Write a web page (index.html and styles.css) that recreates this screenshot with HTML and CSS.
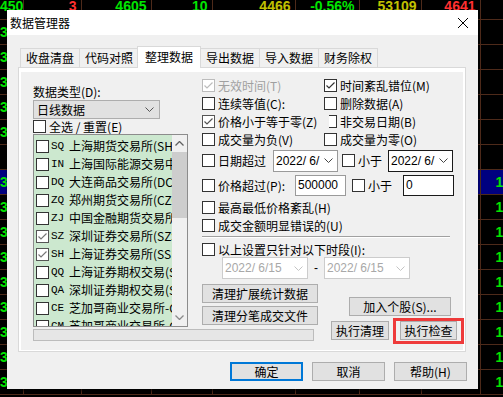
FILE: index.html
```html
<!DOCTYPE html>
<html lang="zh-CN">
<head>
    <meta charset="UTF-8">
    <meta name="viewport" content="width=device-width, initial-scale=1.0">
    <title>数据管理器</title>
    <link rel="stylesheet" href="styles.css">
</head>
<body>
    <table class="quotes">
        <colgroup>
            <col style="width:23px"><col style="width:58px"><col style="width:70px"><col style="width:61px"><col style="width:83px"><col style="width:64px"><col style="width:62px"><col style="width:59px"><col style="width:40px">
        </colgroup>
        <tr><td class="up">4503</td><td class="down">3</td><td class="up">4605</td><td class="up">10</td><td class="flat">4466</td><td class="up">-0.56%</td><td class="flat">53109</td><td class="down">4641</td><td></td></tr>
        <tr><td class="up">3505</td><td></td><td></td><td></td><td></td><td></td><td></td><td></td><td></td></tr>
        <tr><td class="up">3515</td><td></td><td></td><td></td><td></td><td></td><td></td><td></td><td></td></tr>
        <tr><td class="up">3516</td><td></td><td></td><td></td><td></td><td></td><td></td><td></td><td></td></tr>
        <tr><td class="up">3517</td><td></td><td></td><td></td><td></td><td></td><td></td><td></td><td></td></tr>
        <tr><td class="up">3520</td><td></td><td></td><td></td><td></td><td></td><td></td><td></td><td></td></tr>
        <tr><td class="up"></td><td></td><td></td><td></td><td></td><td></td><td></td><td></td><td></td></tr>
        <tr class="sel"><td class="up">3088</td><td></td><td></td><td></td><td></td><td></td><td></td><td></td><td class="up last">12</td></tr>
        <tr><td class="up">3070</td><td></td><td></td><td></td><td></td><td></td><td></td><td></td><td class="up last">12</td></tr>
        <tr><td class="up">3071</td><td></td><td></td><td></td><td></td><td></td><td></td><td></td><td class="up last">12</td></tr>
        <tr><td class="up">3020</td><td></td><td></td><td></td><td></td><td></td><td></td><td></td><td class="up last">12</td></tr>
        <tr><td class="up">3021</td><td></td><td></td><td></td><td></td><td></td><td></td><td></td><td class="up last">12</td></tr>
        <tr><td class="up">3022</td><td></td><td></td><td></td><td></td><td></td><td></td><td></td><td class="up last">12</td></tr>
        <tr><td class="up">3530</td><td></td><td></td><td></td><td></td><td></td><td></td><td></td><td class="up last">12</td></tr>
        <tr><td class="up">3880</td><td></td><td></td><td></td><td></td><td></td><td></td><td></td><td class="up last">12</td></tr>
        <tr><td class="up">3000</td><td></td><td></td><td></td><td></td><td></td><td></td><td></td><td class="up last">12</td></tr>
    </table>

    <div class="dialog">
        <div class="titlebar">
            <span class="title">数据管理器</span>
            <svg class="close" width="10" height="10" viewBox="0 0 10 10"><path d="M0 0L10 10M10 0L0 10" stroke="#000" stroke-width="1"/></svg>
        </div>
        <div class="dialog-body">
            <div class="tabs">
                <span class="tab">收盘清盘</span>
                <span class="tab">代码对照</span>
                <span class="tab active">整理数据</span>
                <span class="tab">导出数据</span>
                <span class="tab">导入数据</span>
                <span class="tab">财务除权</span>
            </div>
            <div class="panel">
                <div class="page">
                    <div class="col-left">
                        <div class="label">数据类型(D):</div>
                        <div class="combo">
                            <span>日线数据</span>
                            <svg width="9" height="5" viewBox="0 0 9 5"><path d="M0.5 0.5L4.5 4.5L8.5 0.5" fill="none" stroke="#555"/></svg>
                        </div>
                        <div class="check-all"><span class="cb"></span>全选 / 重置(E)</div>
                        <div class="list">
                            <ul class="items">
                                <li><span class="cb"></span><span class="code">SQ</span>上海期货交易所(SHFE)</li>
                                <li><span class="cb"></span><span class="code">IN</span>上海国际能源交易中心</li>
                                <li><span class="cb"></span><span class="code">DQ</span>大连商品交易所(DCE)</li>
                                <li><span class="cb"></span><span class="code">ZQ</span>郑州期货交易所(CZCE)</li>
                                <li><span class="cb"></span><span class="code">ZJ</span>中国金融期货交易所</li>
                                <li><span class="cb soft"><svg width="11" height="11" viewBox="0 0 11 11"><path d="M1.5 5.5L4 8L9.5 2.5" fill="none" stroke="#777" stroke-width="1.2"/></svg></span><span class="code">SZ</span>深圳证券交易所(SZSE)</li>
                                <li><span class="cb soft"><svg width="11" height="11" viewBox="0 0 11 11"><path d="M1.5 5.5L4 8L9.5 2.5" fill="none" stroke="#777" stroke-width="1.2"/></svg></span><span class="code">SH</span>上海证券交易所(SSE)</li>
                                <li><span class="cb"></span><span class="code">QQ</span>上海证券期权交易(SHO)</li>
                                <li><span class="cb"></span><span class="code">QA</span>深圳证券期权交易(SZO)</li>
                                <li><span class="cb"></span><span class="code">CE</span>芝加哥商业交易所-CME</li>
                                <li><span class="cb"></span><span class="code">CM</span>芝加哥商业交易所-CBOT</li>
                            </ul>
                            <div class="scrollbar">
                                <div class="sb-btn"><svg width="9" height="5" viewBox="0 0 9 5"><path d="M0.5 4.5L4.5 0.5L8.5 4.5" fill="none" stroke="#606060" stroke-width="1.3"/></svg></div>
                                <div class="sb-thumb"></div>
                                <div class="sb-track"></div>
                                <div class="sb-btn"><svg width="9" height="5" viewBox="0 0 9 5"><path d="M0.5 0.5L4.5 4.5L8.5 0.5" fill="none" stroke="#8a8a8a" stroke-width="1.3"/></svg></div>
                            </div>
                        </div>
                        <div class="progress"></div>
                    </div>

                    <div class="col-right">
                        <div class="opts">
                            <div class="opt off"><span class="cb dis"><svg width="11" height="11" viewBox="0 0 11 11"><path d="M1.5 5.5L4 8L9.5 2.5" fill="none" stroke="#bcbcbc" stroke-width="1.2"/></svg></span>无效时间(T)</div>
                            <div class="opt"><span class="cb"><svg width="11" height="11" viewBox="0 0 11 11"><path d="M1.5 5.5L4 8L9.5 2.5" fill="none" stroke="#333" stroke-width="1.2"/></svg></span>时间紊乱错位(M)</div>
                            <div class="opt"><span class="cb"></span>连续等值(C):</div>
                            <div class="opt"><span class="cb"></span>删除数据(A)</div>
                            <div class="opt"><span class="cb soft"><svg width="11" height="11" viewBox="0 0 11 11"><path d="M1.5 5.5L4 8L9.5 2.5" fill="none" stroke="#555" stroke-width="1.2"/></svg></span>价格小于等于零(Z)</div>
                            <div class="opt"><span class="cb cut"></span>非交易日期(B)</div>
                            <div class="opt"><span class="cb"></span>成交量为负(V)</div>
                            <div class="opt"><span class="cb"></span>成交量为零(O)</div>
                        </div>

                        <div class="line-row tall">
                            <span class="cb"></span><span class="lbl w-date">日期超过</span>
                            <div class="datebox">
                                <span>2022/ 6/</span>
                                <svg width="9" height="5" viewBox="0 0 9 5"><path d="M0.5 0.5L4.5 4.5L8.5 0.5" fill="none" stroke="#444"/></svg>
                            </div>
                            <span class="cb gap-date"></span><span class="lbl w-less">小于</span>
                            <div class="datebox dark">
                                <span>2022/ 6/</span>
                                <svg width="9" height="5" viewBox="0 0 9 5"><path d="M0.5 0.5L4.5 4.5L8.5 0.5" fill="none" stroke="#444"/></svg>
                            </div>
                        </div>

                        <div class="line-row tall">
                            <span class="cb"></span><span class="lbl w-price">价格超过(P):</span>
                            <div class="numbox">500000</div>
                            <span class="cb gap-price"></span><span class="lbl w-less2">小于</span>
                            <div class="numbox dark">0</div>
                        </div>

                        <div class="opt single"><span class="cb"></span>最高最低价格紊乱(H)</div>
                        <div class="opt single last"><span class="cb"></span>成交金额明显错误的(U)</div>
                        <div class="sep"></div>
                        <div class="opt period"><span class="cb"></span>以上设置只针对以下时段(I):</div>

                        <div class="range">
                            <div class="datebox disabled">
                                <span>2022/ 6/15</span>
                                <svg width="9" height="5" viewBox="0 0 9 5"><path d="M0.5 0.5L4.5 4.5L8.5 0.5" fill="none" stroke="#c4c4c4"/></svg>
                            </div>
                            <span class="dash">-</span>
                            <div class="datebox disabled">
                                <span>2022/ 6/15</span>
                                <svg width="9" height="5" viewBox="0 0 9 5"><path d="M0.5 0.5L4.5 4.5L8.5 0.5" fill="none" stroke="#c4c4c4"/></svg>
                            </div>
                        </div>

                        <div class="actions">
                            <div class="stack-left">
                                <button class="btn wide">清理扩展统计数据</button>
                                <button class="btn wide">清理分笔成交文件</button>
                            </div>
                            <div class="stack-right">
                                <button class="btn add">加入个股(S)...</button>
                                <div class="exec">
                                    <button class="btn run">执行清理</button>
                                    <span class="mark"><button class="btn check">执行检查</button></span>
                                </div>
                            </div>
                        </div>
                    </div>
                </div>
            </div>
            <div class="footer">
                <button class="btn foot default">确定</button>
                <button class="btn foot">取消</button>
                <button class="btn foot">帮助(H)</button>
            </div>
        </div>
    </div>
</body>
</html>
```

FILE: styles.css
```css
* {
    box-sizing: border-box;
}

body {
    margin: 0;
    background-color: #000;
    font-family: "Noto Sans CJK SC", sans-serif;
    font-size: 12px;
    color: #000;
    overflow: hidden;
    position: relative;
    height: 397px;
}

/* quote grid behind the dialog */
.quotes {
    border-collapse: collapse;
    table-layout: fixed;
    margin-top: -6px;
    width: 520px;
    font-family: "Liberation Sans", Arial, sans-serif;
    font-weight: bold;
    font-size: 14px;
}

.quotes td {
    height: 25px;
    padding: 0 4px 0 0;
    border-right: 1px solid #4e2a1a;
    border-bottom: 1px solid #4e2a1a;
    text-align: right;
    white-space: nowrap;
    overflow: hidden;
    line-height: 24px;
}

.quotes td.last {
    text-align: left;
    padding-left: 15px;
}

.quotes .sel td {
    background-color: #000080;
}

.up { color: #00e600; }
.down { color: #ff3030; }
.flat { color: #c0c000; }

/* dialog window */
.dialog {
    position: absolute;
    left: 7px;
    top: 10px;
    width: 471px;
    height: 379px;
    background-color: #f0f0f0;
    box-shadow: 0 2px 2px rgba(0, 0, 0, 0.6);
}

.titlebar {
    height: 25px;
    background-color: #fff;
    display: flex;
    align-items: center;
    justify-content: space-between;
    padding: 0 10px 0 3px;
}

.title {
    font-size: 12px;
    line-height: 16px;
}

.dialog-body {
    padding: 11px 0 0 11px;
}

.tabs {
    display: flex;
    align-items: flex-end;
    height: 21px;
    padding-left: 2px;
}

.tab {
    height: 19px;
    padding: 0 5px;
    line-height: 18px;
    border: 1px solid #d9d9d9;
    border-bottom: none;
    background-color: #f0f0f0;
    margin-right: -1px;
}

.tab.active {
    position: relative;
    z-index: 1;
    height: 22px;
    padding: 0 7px;
    margin-bottom: -1px;
    margin-left: -1px;
    background-color: #fff;
    line-height: 19px;
}

.panel {
    width: 448px;
    height: 285px;
    border: 1px solid #d9d9d9;
    background-color: #fff;
    padding: 4px 2px 1px 2px;
}

.page {
    height: 100%;
    background-color: #f0f0f0;
    display: flex;
    padding-left: 12px;
}

/* left column */
.col-left {
    width: 156px;
    padding-top: 12px;
}

.label {
    line-height: 16px;
}

.combo {
    width: 127px;
    height: 19px;
    border: 1px solid #adadad;
    background-color: #e1e1e1;
    display: flex;
    align-items: center;
    justify-content: space-between;
    padding: 0 5px 0 3px;
    line-height: 16px;
}

.check-all {
    height: 15px;
    display: flex;
    align-items: center;
    line-height: 15px;
}

.check-all .cb {
    margin-right: 3px;
}

.cb {
    display: inline-block;
    flex: none;
    width: 13px;
    height: 13px;
    border: 1px solid #333;
    background-color: #fff;
}

.cb svg {
    display: block;
}

.cb.soft {
    border-color: #555;
}

.cb.dis {
    border-color: #bcbcbc;
}

.cb.cut {
    width: 8px;
    border-left: none;
    margin-left: 5px;
    margin-right: 3px !important;
}

.list {
    width: 155px;
    height: 193px;
    border: 1px solid #8c8c8c;
    background-color: #cce8cf;
    display: flex;
}

.items {
    list-style: none;
    margin: 0;
    padding: 2px 0 0 2px;
    flex: 1;
    overflow: hidden;
}

.items li {
    height: 18px;
    display: flex;
    align-items: center;
    white-space: nowrap;
    line-height: 18px;
}

.code {
    flex: none;
    width: 18px;
    margin-left: 2px;
    font-family: "Liberation Mono", monospace;
    font-size: 11px;
}

.scrollbar {
    width: 15px;
    display: flex;
    flex-direction: column;
    background-color: #f0f0f0;
}

.sb-btn {
    height: 17px;
    display: flex;
    align-items: center;
    justify-content: center;
}

.sb-thumb {
    height: 66px;
    background-color: #cdcdcd;
}

.sb-track {
    flex: 1;
}

.progress {
    width: 281px;
    height: 12px;
    margin-top: 2px;
    border: 1px solid #bcbcbc;
    background-color: #e6e6e6;
}

/* right column */
.col-right {
    width: 262px;
    margin-left: 13px;
    padding-top: 4px;
}

.opts {
    display: grid;
    grid-template-columns: 122px 1fr;
}

.opt {
    height: 18px;
    display: flex;
    align-items: center;
    white-space: nowrap;
}

.opt .cb {
    margin-right: 3px;
}

.opt.off {
    color: #a0a0a0;
}

.opt.last {
    height: 19px;
}

.line-row {
    display: flex;
    align-items: center;
    white-space: nowrap;
}

.line-row.tall {
    height: 25px;
}

.lbl {
    flex: none;
    padding-left: 3px;
}

.w-date { width: 58px; }
.w-less { width: 33px; }
.w-price { width: 80px; }
.w-less2 { width: 38px; }

.gap-date { margin-left: 4px; }
.gap-price { margin-left: 6px; }

.datebox {
    flex: none;
    width: 65px;
    height: 22px;
    border: 1px solid #9a9a9a;
    background-color: #fff;
    display: flex;
    align-items: center;
    justify-content: space-between;
    padding: 0 4px 0 2px;
    font-family: "Liberation Sans", Arial, sans-serif;
    font-size: 12px;
}

.datebox.dark {
    border-color: #1a1a1a;
}

.datebox.disabled {
    width: 86px;
    border-color: #cccccc;
    color: #a8a8a8;
}

.numbox {
    flex: none;
    width: 51px;
    height: 21px;
    border: 1px solid #9a9a9a;
    background-color: #fff;
    padding-left: 2px;
    line-height: 19px;
    font-family: "Liberation Sans", Arial, sans-serif;
    font-size: 12px;
}

.numbox.dark {
    border-color: #1a1a1a;
}

.sep {
    width: 248px;
    margin-top: 1px;
    border-top: 1px solid #a0a0a0;
    border-bottom: 1px solid #fff;
}

.opt.period {
    height: 16px;
    margin-top: 3px;
}

.range {
    display: flex;
    align-items: center;
    height: 22px;
    padding-left: 20px;
}

.dash {
    width: 16px;
    text-align: center;
    font-family: "Liberation Sans", Arial, sans-serif;
}

.actions {
    display: flex;
    margin-top: 5px;
}

.stack-left {
    display: flex;
    flex-direction: column;
    gap: 3px;
}

.btn {
    height: 19px;
    padding: 0;
    border: 1px solid #adadad;
    background-color: #e1e1e1;
    font-family: "Noto Sans CJK SC", sans-serif;
    font-size: 12px;
    line-height: 16px;
    color: #000;
}

.btn.wide {
    width: 116px;
}

.stack-right {
    margin-left: 13px;
}

.btn.add {
    display: block;
    width: 102px;
    margin: 13px 0 0 18px;
}

.exec {
    display: flex;
    align-items: flex-start;
    margin-top: 2px;
}

.btn.run {
    width: 58px;
    margin-top: 3px;
}

.mark {
    margin-left: 4px;
    border: 3px solid #ee3a3a;
    padding: 0 4px 1px 4px;
}

.btn.check {
    display: block;
    width: 57px;
}

/* bottom buttons */
.footer {
    display: flex;
    justify-content: flex-end;
    margin-top: 10px;
    padding-right: 11px;
}

.btn.foot {
    width: 73px;
}

.btn.foot + .btn.foot {
    margin-left: 9px;
}

.btn.default {
    border: 2px solid #0078d7;
}
```
